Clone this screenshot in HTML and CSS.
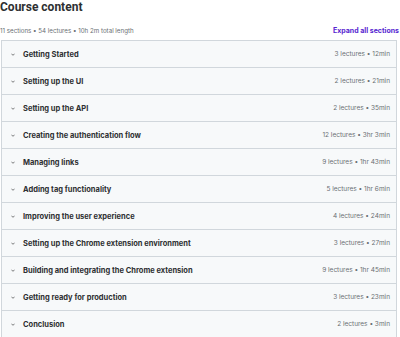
FILE: index.html
```html
<!DOCTYPE html>
<html lang="en">
<head>
    <meta charset="UTF-8">
    <meta name="viewport" content="width=device-width, initial-scale=1.0">
    <title>Course content</title>
    <link rel="stylesheet" href="styles.css">
</head>
<body>

<h2 class="title">Course content</h2>

<div class="summary">
    <span>11 sections • 54 lectures • 10h 2m total length</span>
    <a class="expand" href="#">Expand all sections</a>
</div>

<div class="sections">
    <div class="section"><span class="chev"><svg viewBox="0 0 10 6"><path d="M1 1l4 4 4-4"/></svg></span><span class="name">Getting Started</span><span class="meta">3 lectures • 12min</span></div>
    <div class="section"><span class="chev"><svg viewBox="0 0 10 6"><path d="M1 1l4 4 4-4"/></svg></span><span class="name">Setting up the UI</span><span class="meta">2 lectures • 21min</span></div>
    <div class="section"><span class="chev"><svg viewBox="0 0 10 6"><path d="M1 1l4 4 4-4"/></svg></span><span class="name">Setting up the API</span><span class="meta">2 lectures • 35min</span></div>
    <div class="section"><span class="chev"><svg viewBox="0 0 10 6"><path d="M1 1l4 4 4-4"/></svg></span><span class="name">Creating the authentication flow</span><span class="meta">12 lectures • 3hr 3min</span></div>
    <div class="section"><span class="chev"><svg viewBox="0 0 10 6"><path d="M1 1l4 4 4-4"/></svg></span><span class="name">Managing links</span><span class="meta">9 lectures • 1hr 43min</span></div>
    <div class="section"><span class="chev"><svg viewBox="0 0 10 6"><path d="M1 1l4 4 4-4"/></svg></span><span class="name">Adding tag functionality</span><span class="meta">5 lectures • 1hr 6min</span></div>
    <div class="section"><span class="chev"><svg viewBox="0 0 10 6"><path d="M1 1l4 4 4-4"/></svg></span><span class="name">Improving the user experience</span><span class="meta">4 lectures • 24min</span></div>
    <div class="section"><span class="chev"><svg viewBox="0 0 10 6"><path d="M1 1l4 4 4-4"/></svg></span><span class="name">Setting up the Chrome extension environment</span><span class="meta">3 lectures • 27min</span></div>
    <div class="section"><span class="chev"><svg viewBox="0 0 10 6"><path d="M1 1l4 4 4-4"/></svg></span><span class="name">Building and integrating the Chrome extension</span><span class="meta">9 lectures • 1hr 45min</span></div>
    <div class="section"><span class="chev"><svg viewBox="0 0 10 6"><path d="M1 1l4 4 4-4"/></svg></span><span class="name">Getting ready for production</span><span class="meta">3 lectures • 23min</span></div>
    <div class="section"><span class="chev"><svg viewBox="0 0 10 6"><path d="M1 1l4 4 4-4"/></svg></span><span class="name">Conclusion</span><span class="meta">2 lectures • 3min</span></div>
</div>

</body>
</html>
```

FILE: styles.css
```css
body {
    font-family: Inter, "Noto Sans", sans-serif;
    margin: 0;
    padding: 0;
    background-color: #fff;
    color: #2d2f31;
    overflow: hidden;
}
.title {
    margin: 0;
    font-family: Roboto, Inter, sans-serif;
    font-size: 12px;
    font-weight: 700;
    line-height: 14px;
}
.summary {
    display: flex;
    justify-content: space-between;
    align-items: center;
    height: 20px;
    margin-top: 6px;
    font-size: 6.2px;
    color: #6a6f73;
}
.expand {
    color: #5624d0;
    font-weight: 700;
    font-size: 7px;
    text-decoration: none;
    margin-right: 1px;
}
.sections {
    margin: 0 3px 0 1px;
    border: 1px solid #d1d7dc;
    border-bottom: none;
}
.section {
    display: flex;
    align-items: center;
    height: 26px;
    border-bottom: 1px solid #d1d7dc;
    background-color: #f7f9fa;
    padding: 0 6px 0 9px;
}
.chev {
    width: 12px;
    display: flex;
    align-items: center;
}
.chev svg {
    width: 4px;
    height: 3px;
    fill: none;
    stroke: #2d2f31;
    stroke-width: 1.6;
}
.name {
    flex: 1;
    font-size: 7.5px;
    font-weight: 700;
}
.meta {
    font-size: 6.5px;
    color: #6a6f73;
}
```
